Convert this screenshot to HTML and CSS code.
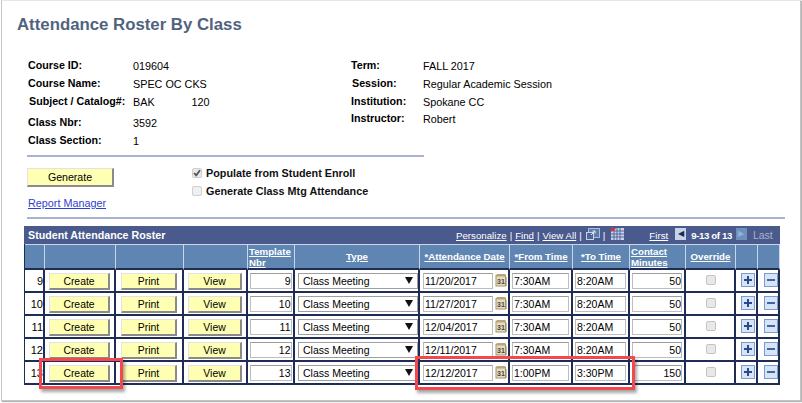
FILE: index.html
```html
<!DOCTYPE html>
<html lang="en">
<head>
<meta charset="utf-8">
<title>Attendance Roster By Class</title>
<link rel="stylesheet" href="styles.css">
</head>
<body>
<svg class="defs" width="0" height="0" aria-hidden="true">
  <symbol id="plus" viewBox="0 0 14 14"><rect x=".5" y=".5" width="13" height="13" fill="#d6e4f7" stroke="#7d9acb"/><path d="M3 7h8M7 3v8" stroke="#2a4a8e" stroke-width="2"/></symbol>
  <symbol id="minus" viewBox="0 0 14 14"><rect x=".5" y=".5" width="13" height="13" fill="#d6e4f7" stroke="#7d9acb"/><path d="M3 7h8" stroke="#47639f" stroke-width="2"/></symbol>
  <symbol id="calbg" viewBox="0 0 12 13">
    <rect x="1" y="1.500" width="9.500" height="10.500" fill="#e6dcc0" stroke="#a8946a"/>
    <rect x="1.500" y="0" width="9" height="2.500" fill="#b9a67c"/>
    <rect x="11" y="3" width="1" height="9" fill="#cdbf9c"/>
  </symbol>
</svg>
<main class="page">
  <h1 class="title">Attendance Roster By Class</h1>
  <section class="info">
    <div class="info-left">
      <div class="row r18"><span class="lbl">Course ID:</span><span class="val">019604</span></div>
      <div class="row r18"><span class="lbl">Course Name:</span><span class="val">SPEC OC CKS</span></div>
      <div class="row r21"><span class="lbl nudge">Subject / Catalog#:</span><span class="val">BAK</span><span class="val cat">120</span></div>
      <div class="row r18"><span class="lbl">Class Nbr:</span><span class="val">3592</span></div>
      <div class="row r18"><span class="lbl">Class Section:</span><span class="val">1</span></div>
    </div>
    <div class="info-right">
      <div class="row r18"><span class="lbl">Term:</span><span class="val">FALL 2017</span></div>
      <div class="row r18"><span class="lbl nudge">Session:</span><span class="val">Regular Academic Session</span></div>
      <div class="row r17"><span class="lbl">Institution:</span><span class="val">Spokane CC</span></div>
      <div class="row r18"><span class="lbl">Instructor:</span><span class="val">Robert</span></div>
    </div>
  </section>
  <hr class="rule rule-short">
  <section class="actions">
    <div class="act-left">
      <span class="btn btn-gen">Generate</span>
      <a class="report" href="#">Report Manager</a>
    </div>
    <div class="act-right">
      <div class="chk-row"><span class="chk on"><svg viewBox="0 0 10 10" width="10" height="10"><path d="M2 5l2.200 2.400L8 2.200" fill="none" stroke="#555" stroke-width="1.800"/></svg></span><span class="chk-lbl">Populate from Student Enroll</span></div>
      <div class="chk-row"><span class="chk dim"></span><span class="chk-lbl">Generate Class Mtg Attendance</span></div>
    </div>
  </section>
  <hr class="rule rule-long">
  <section class="grid">
    <div class="bar">
      <span class="bar-title">Student Attendance Roster</span>
      <a href="#" class="bl">Personalize</a><span class="sep">|</span><a href="#" class="bl">Find</a><span class="sep">|</span><a href="#" class="bl">View All</a><span class="sep">|</span>
      <svg class="zoomi" width="14" height="12" viewBox="0 0 14 12"><rect x="2.500" y=".5" width="11" height="9" fill="#5f7cab" stroke="#a9bcdb"/><rect x=".5" y="4.500" width="7" height="7" fill="#4f6798" stroke="#c7d3e8"/><path d="M5 7l4-4M6.500 3H9v2.500" stroke="#dfe7f3" fill="none"/></svg>
      <span class="sep">|</span>
      <svg class="gridi" width="13" height="12" viewBox="0 0 13 12"><rect width="13" height="12" fill="#c9d4ea"/><path d="M0 3h13M0 6h13M0 9h13M3 0v12M6 0v12M9 0v12" stroke="#5566a0"/><path d="M0 0h5L3 3H0z" fill="#d8343c"/></svg>
      <a href="#" class="bl first">First</a>
      <span class="nav act">◀</span>
      <span class="count">9-13 of 13</span>
      <span class="nav off">▶</span>
      <span class="last">Last</span>
    </div>
    <table class="roster">
      <colgroup>
        <col class="c1"><col class="c2"><col class="c3"><col class="c4"><col class="c5"><col class="c6"><col class="c7"><col class="c8"><col class="c9"><col class="c10"><col class="c11"><col class="c12"><col class="c13">
      </colgroup>
      <thead>
        <tr>
          <th></th><th></th><th></th><th></th>
          <th class="left"><a href="#">Template<br>Nbr</a></th>
          <th><a href="#">Type</a></th>
          <th><a href="#">*Attendance Date</a></th>
          <th><a href="#">*From Time</a></th>
          <th><a href="#">*To Time</a></th>
          <th class="left"><a href="#">Contact<br>Minutes</a></th>
          <th><a href="#">Override</a></th>
          <th></th><th></th>
        </tr>
      </thead>
      <tbody>
        <tr><td class="num">9</td><td><span class="btn b-create">Create</span></td><td><span class="btn b-print">Print</span></td><td><span class="btn b-view">View</span></td><td><span class="inp right w-t">9</span></td><td><span class="inp sel"><span>Class Meeting</span><i class="arrow"></i></span></td><td><span class="datewrap"><span class="inp w-d">11/20/2017</span><span class="calwrap"><svg class="cal"><use href="#calbg"/></svg><span class="calnum">31</span></span></span></td><td><span class="inp w-f">7:30AM</span></td><td><span class="inp w-to">8:20AM</span></td><td><span class="inp right w-m">50</span></td><td><span class="box"></span></td><td><svg class="pm"><use href="#plus"/></svg></td><td><svg class="pm pm-m"><use href="#minus"/></svg></td></tr>
        <tr><td class="num">10</td><td><span class="btn b-create">Create</span></td><td><span class="btn b-print">Print</span></td><td><span class="btn b-view">View</span></td><td><span class="inp right w-t">10</span></td><td><span class="inp sel"><span>Class Meeting</span><i class="arrow"></i></span></td><td><span class="datewrap"><span class="inp w-d">11/27/2017</span><span class="calwrap"><svg class="cal"><use href="#calbg"/></svg><span class="calnum">31</span></span></span></td><td><span class="inp w-f">7:30AM</span></td><td><span class="inp w-to">8:20AM</span></td><td><span class="inp right w-m">50</span></td><td><span class="box"></span></td><td><svg class="pm"><use href="#plus"/></svg></td><td><svg class="pm pm-m"><use href="#minus"/></svg></td></tr>
        <tr><td class="num">11</td><td><span class="btn b-create">Create</span></td><td><span class="btn b-print">Print</span></td><td><span class="btn b-view">View</span></td><td><span class="inp right w-t">11</span></td><td><span class="inp sel"><span>Class Meeting</span><i class="arrow"></i></span></td><td><span class="datewrap"><span class="inp w-d">12/04/2017</span><span class="calwrap"><svg class="cal"><use href="#calbg"/></svg><span class="calnum">31</span></span></span></td><td><span class="inp w-f">7:30AM</span></td><td><span class="inp w-to">8:20AM</span></td><td><span class="inp right w-m">50</span></td><td><span class="box"></span></td><td><svg class="pm"><use href="#plus"/></svg></td><td><svg class="pm pm-m"><use href="#minus"/></svg></td></tr>
        <tr><td class="num">12</td><td><span class="btn b-create">Create</span></td><td><span class="btn b-print">Print</span></td><td><span class="btn b-view">View</span></td><td><span class="inp right w-t">12</span></td><td><span class="inp sel"><span>Class Meeting</span><i class="arrow"></i></span></td><td><span class="datewrap"><span class="inp w-d">12/11/2017</span><span class="calwrap"><svg class="cal"><use href="#calbg"/></svg><span class="calnum">31</span></span></span></td><td><span class="inp w-f">7:30AM</span></td><td><span class="inp w-to">8:20AM</span></td><td><span class="inp right w-m">50</span></td><td><span class="box"></span></td><td><svg class="pm"><use href="#plus"/></svg></td><td><svg class="pm pm-m"><use href="#minus"/></svg></td></tr>
        <tr><td class="num">13</td><td><span class="btn b-create">Create</span></td><td><span class="btn b-print">Print</span></td><td><span class="btn b-view">View</span></td><td><span class="inp right w-t">13</span></td><td><span class="inp sel"><span>Class Meeting</span><i class="arrow"></i></span></td><td><span class="datewrap"><span class="inp w-d">12/12/2017</span><span class="calwrap"><svg class="cal"><use href="#calbg"/></svg><span class="calnum">31</span></span></span></td><td><span class="inp w-f">1:00PM</span></td><td><span class="inp w-to">3:30PM</span></td><td><span class="inp right w-m">150</span></td><td><span class="box"></span></td><td><svg class="pm"><use href="#plus"/></svg></td><td><svg class="pm pm-m"><use href="#minus"/></svg></td></tr>
      </tbody>
    </table>
  </section>
  <div class="mark mark-a"></div>
  <div class="mark mark-b"></div>
</main>
</body>
</html>
```
FILE: styles.css
```css
* { box-sizing: border-box; }
html, body { margin: 0; padding: 0; background: #fff; overflow: hidden; }
body { font-family: "Liberation Sans", Arial, sans-serif; font-size: 11px; color: #000; width: 802px; height: 403px; }
.defs { position: absolute; }
.page {
  position: relative;
  width: 800px; height: 401px; margin-left: 1px;
  border: 1px solid #c4c4c4; border-top-color: #e6e6e6;
  box-shadow: 1px 1px 1px #b5b5b5;
  padding: 14px 0 0 15px;
}
.title { margin: 0; height: 21px; font-size: 16.800px; line-height: 20px; font-weight: 700; color: #51627f; }
.info { display: flex; margin: 22px 0 0 11px; height: 97px; }
.info-left { width: 323px; }
.row { display: flex; align-items: flex-start; }
.r18 { height: 18px; } .r21 { height: 21px; } .r17 { height: 17px; }
.lbl { font-size: 10.700px; font-weight: 700; line-height: 14px; width: 105px; white-space: nowrap; }
.info-right .lbl { width: 72px; }
.nudge { padding-left: 1px; }
.val { line-height: 15px; margin-top: 1px; font-size: 10.800px; white-space: nowrap; }
.cat { margin-left: 37px; }
.rule { border: 0; height: 2px; background: #a9b3d0; }
.rule-short { width: 397px; margin: 0 0 0 10px; }
.rule-long { width: 758px; margin: 0 0 0 10px; }
.actions { display: flex; height: 60px; margin-left: 10px; padding-top: 11px; }
.act-left { width: 165px; display: flex; flex-direction: column; align-items: flex-start; }
.btn {
  display: inline-block; text-align: center; background: #ffffb4; color: #000; font-size: 10.400px; line-height: 14px;
  border-style: solid; border-width: 1px 2px 2px 1px; border-color: #e2e2e2 #8a8a8a #8a8a8a #e2e2e2;
}
.btn-gen { width: 87px; height: 19px; line-height: 17px; font-size: 10.600px; }
.report { margin: 10px 0 0 1px; color: #2f3fd0; font-size: 10.800px; line-height: 13px; }
.act-right { margin-top: -4px; }
.chk-row { display: flex; align-items: center; height: 18px; }
.chk { width: 10px; height: 10px; margin-right: 4px; border: 1px solid #cfcfcf; border-radius: 2px; background: #e8e8e8; display: block; }
.chk svg { display: block; margin: -1px; }
.chk.dim { background: #f0f0f0; }
.chk-lbl { font-size: 10.800px; font-weight: 700; color: #111; white-space: nowrap; }
.grid { width: 756px; margin: 7px 0 0 7px; }
.bar { display: flex; align-items: center; height: 18px; background: #4a5a8c; color: #fff; font-size: 9.700px; padding-left: 4px; white-space: nowrap; }
.bar-title { font-weight: 700; font-size: 10.700px; flex: none; width: 428px; }
.bl { color: #fff; flex: none; }
.sep { margin: 0 3px; flex: none; }
.zoomi { margin: 0 0 2px 1px; flex: none; }
.gridi { margin: 0 0 3px 3px; flex: none; }
.first { margin-left: 25px; }
.nav { display: inline-flex; flex: none; align-items: center; justify-content: center; width: 11px; height: 12px; font-size: 8px; line-height: 1; margin-bottom: 3px; }
.nav.act { background: #c6d3e8; color: #1c2a50; margin-left: 7px; }
.nav.off { background: #6f90bd; color: #8fb0d8; margin-left: 4px; }
.count { font-weight: 700; margin-left: 5px; flex: none; letter-spacing: -.4px; }
.last { color: #a9b3cc; margin-left: 6px; flex: none; font-size: 10.500px; }
.roster { border-collapse: separate; border-spacing: 0; table-layout: fixed; width: 756px; border-left: 1px solid #1f2c55; }
.c1 { width: 20px; } .c2 { width: 71px; } .c3 { width: 68px; } .c4 { width: 64px; } .c5 { width: 47px; }
.c6 { width: 125px; } .c7 { width: 90px; } .c8 { width: 63px; } .c9 { width: 57px; } .c10 { width: 56px; }
.c11 { width: 50px; } .c12 { width: 22px; } .c13 { width: 22px; }
.roster th {
  height: 26px; padding: 0; background: #5f86b3; border-right: 1px solid #c9d6e8; border-top: 1px solid #c9d6e8;
  border-bottom: 2px solid #1f2c55; font-size: 9.700px; line-height: 11px; font-weight: 700; text-align: center; white-space: nowrap;
}
.roster th.left { text-align: left; padding-left: 1px; }
.roster th a { color: #fff; }
.roster td {
  height: 23px; padding: 0; text-align: center; vertical-align: middle; background: #fff;
  border-right: 2px solid #1f2c55; border-bottom: 2px solid #1f2c55; font-size: 11px; white-space: nowrap;
}
.roster td.num { text-align: right; padding-right: 0; }
.b-create, .b-print, .b-view { height: 17px; line-height: 15px; margin-top: 1px; }
.b-create { width: 61px; }
.b-print { width: 56px; }
.b-view { width: 54px; }
.inp {
  display: inline-block; height: 16px; line-height: 14px; border: 1px solid #bdbdbd; border-top-color: #9c9c9c; background: #fff;
  text-align: left; padding: 0 1px; font-size: 10.500px; vertical-align: middle; overflow: hidden;
}
.right { text-align: right; padding-right: 0; }
.w-t { width: 42px; } .w-d { width: 70px; } .w-f { width: 57px; } .w-to { width: 51px; } .w-m { width: 50px; }
.sel { width: 120px; margin-left: 3px; display: inline-flex; justify-content: space-between; align-items: center; padding: 0 4px; border-color: #9f9f9f; }
.arrow { width: 0; height: 0; border-left: 4px solid transparent; border-right: 4px solid transparent; border-top: 7px solid #111; }
.datewrap { display: inline-flex; align-items: center; gap: 2px; margin-left: 2px; }
.calwrap { position: relative; display: block; width: 12px; height: 13px; }
.cal { width: 12px; height: 13px; display: block; }
.calnum { position: absolute; left: 2px; top: 3px; font-size: 7px; line-height: 9px; font-weight: 700; color: #444; }
.box { display: inline-block; width: 10px; height: 10px; margin: 0 0 2px 2px; border: 1px solid #c4c4c4; border-radius: 2px; background: #e8e8e8; vertical-align: middle; }
.pm { width: 14px; height: 14px; display: block; margin: 0 0 1px 5px; }
.pm-m { margin-left: 6px; }
.mark { position: absolute; border: 3px solid #f24a4c; box-shadow: 2px 3px 3px rgba(0,0,0,.35); }
.mark-a { left: 37px; top: 357px; width: 84px; height: 31px; }
.mark-b { left: 413px; top: 355px; width: 220px; height: 34px; }
```
